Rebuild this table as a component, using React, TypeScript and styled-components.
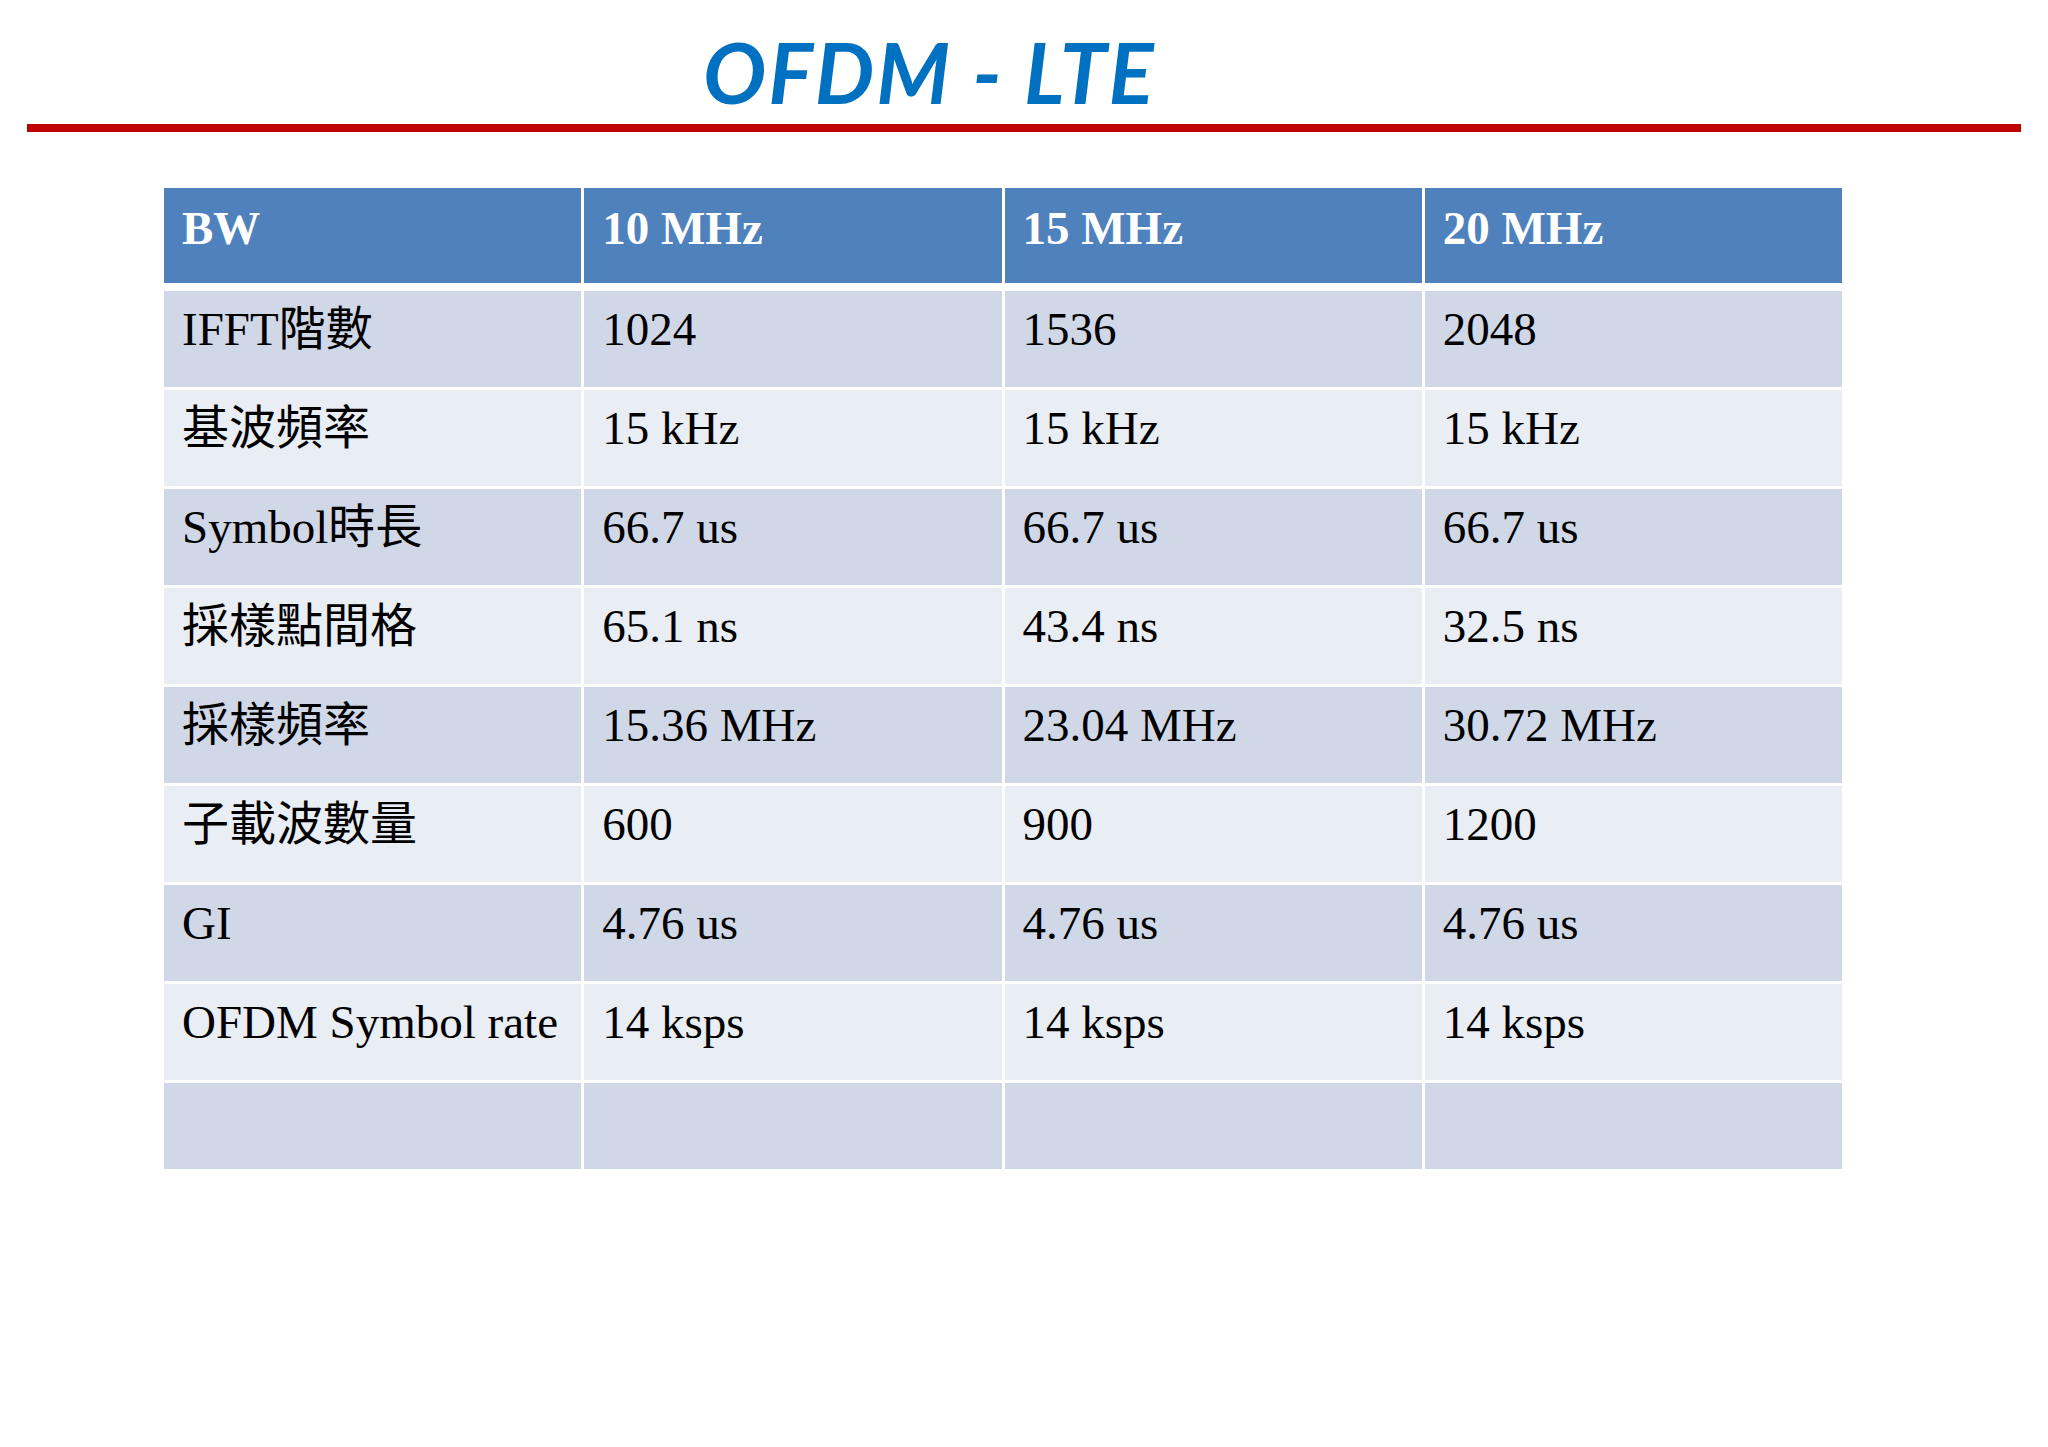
import React from "react";
import styled, { createGlobalStyle } from "styled-components";

const GlobalStyle = createGlobalStyle`
  html, body {
    margin: 0;
    padding: 0;
    background: #ffffff;
  }
  body {
    width: 2048px;
    height: 1447px;
    overflow: hidden;
  }
`;

const headers = ["BW", "10 MHz", "15 MHz", "20 MHz"];

const rows: string[][] = [
  ["IFFT階數", "1024", "1536", "2048"],
  ["基波頻率", "15 kHz", "15 kHz", "15 kHz"],
  ["Symbol時長", "66.7 us", "66.7 us", "66.7 us"],
  ["採樣點間格", "65.1 ns", "43.4 ns", "32.5 ns"],
  ["採樣頻率", "15.36 MHz", "23.04 MHz", "30.72 MHz"],
  ["子載波數量", "600", "900", "1200"],
  ["GI", "4.76 us", "4.76 us", "4.76 us"],
  ["OFDM Symbol rate", "14 ksps", "14 ksps", "14 ksps"],
  ["", "", "", ""],
];

function App() {
  return (
    <Slide>
      <GlobalStyle />
      <TitleBar>
        <Title>OFDM - LTE</Title>
      </TitleBar>
      <Rule />
      <Table>
        <HeaderRow>
          {headers.map((h) => (
            <HeadCell key={h}>{h}</HeadCell>
          ))}
        </HeaderRow>
        {rows.map((r, i) => (
          <Row key={i} $short={i === rows.length - 1}>
            {r.map((c, j) => (
              <Cell key={j} $band={i % 2 === 0}>
                {c}
              </Cell>
            ))}
          </Row>
        ))}
      </Table>
    </Slide>
  );
}

export default App;

const Slide = styled.div`
  width: 2048px;
  height: 1447px;
  background: #ffffff;
  display: flex;
  flex-direction: column;
`;

const TitleBar = styled.div`
  height: 124px;
  display: flex;
  align-items: flex-start;
  padding-left: 703px;
  box-sizing: border-box;
`;

const Title = styled.h1`
  margin: 0;
  padding-top: 22px;
  font-family: "Lato", "Liberation Sans", sans-serif;
  font-style: italic;
  font-weight: 700;
  font-size: 84px;
  line-height: 100px;
  color: #0070c0;
  letter-spacing: 2px;
`;

const Rule = styled.div`
  height: 8px;
  margin: 0 27px;
  background: #c00000;
`;

const Table = styled.div`
  margin: 56px 0 0 164px;
  width: 1678px;
  display: flex;
  flex-direction: column;
  gap: 3px;
  font-family: "Liberation Serif", "Noto Sans CJK TC", serif;
  font-size: 47px;
  line-height: 46px;
`;

const HeaderRow = styled.div`
  display: grid;
  grid-template-columns: repeat(4, 1fr);
  column-gap: 3px;
  height: 95px;
  margin-bottom: 5px;
`;

const HeadCell = styled.div`
  background: #4f81bd;
  color: #ffffff;
  font-weight: 700;
  padding: 17px 18px 0;
  white-space: nowrap;
`;

const Row = styled.div<{ $short?: boolean }>`
  display: grid;
  grid-template-columns: repeat(4, 1fr);
  column-gap: 3px;
  height: ${(p) => (p.$short ? "86px" : "96px")};
`;

const Cell = styled.div<{ $band: boolean }>`
  background: ${(p) => (p.$band ? "#d0d8e8" : "#e9edf4")};
  color: #000000;
  padding: 15px 18px 0;
  white-space: nowrap;
`;
